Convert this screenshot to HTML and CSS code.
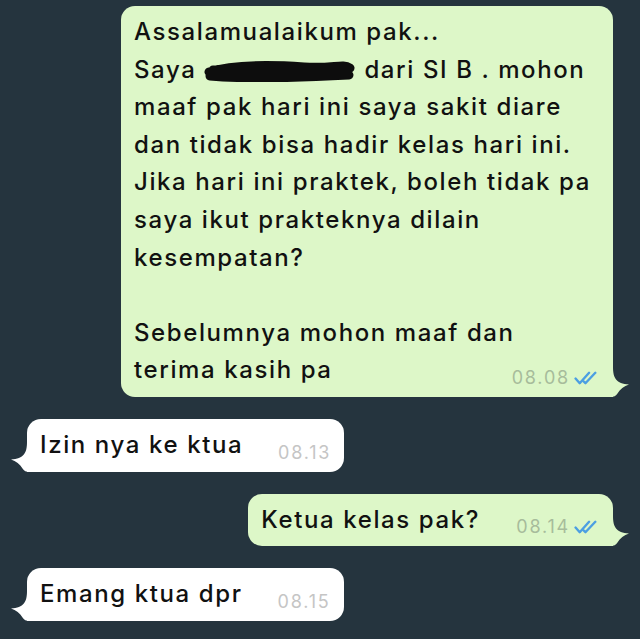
FILE: index.html
```html
<!DOCTYPE html>
<html lang="id">
<head>
    <meta charset="UTF-8">
    <meta name="viewport" content="width=device-width, initial-scale=1.0">
    <title>Chat</title>
    <link rel="stylesheet" href="styles.css">
</head>
<body>

<div class="chat">

    <div class="bubble out wide">
        <p class="text">Assalamualaikum pak...<br>Saya <svg class="redacted" viewBox="0 0 152 22"><path d="M5 12 C30 4 70 5 100 7 S138 3 146 8 M6 16 C40 19 90 18 145 15 M9 10 L140 12" /></svg> dari SI B . mohon<br>maaf pak hari ini saya sakit diare<br>dan tidak bisa hadir kelas hari ini.<br>Jika hari ini praktek, boleh tidak pa<br>saya ikut prakteknya dilain<br>kesempatan?<br><br>Sebelumnya mohon maaf dan<br>terima kasih pa</p>
        <span class="meta">08.08 <svg class="ticks" viewBox="0 0 25 13"><path d="M1.5 7 L5.5 11.5 L14.5 1.5 M9.5 10 L11 11.5 L20.5 1.5" /></svg></span>
        <svg class="tail" viewBox="0 0 22 30"><path d="M0 0 H6 C6 11 9 16.5 22 17.5 C17 19 13 22 10.5 26.5 C9 29 7 30 3 30 H0 Z" /></svg>
    </div>

    <div class="bubble in">
        <p class="text">Izin nya ke ktua<span class="spacer"></span></p>
        <span class="meta">08.13</span>
        <svg class="tail" viewBox="0 0 22 30"><path d="M0 0 H6 C6 11 9 16.5 22 17.5 C17 19 13 22 10.5 26.5 C9 29 7 30 3 30 H0 Z" /></svg>
    </div>

    <div class="bubble out">
        <p class="text">Ketua kelas pak?<span class="spacer"></span></p>
        <span class="meta">08.14 <svg class="ticks" viewBox="0 0 25 13"><path d="M1.5 7 L5.5 11.5 L14.5 1.5 M9.5 10 L11 11.5 L20.5 1.5" /></svg></span>
        <svg class="tail" viewBox="0 0 22 30"><path d="M0 0 H6 C6 11 9 16.5 22 17.5 C17 19 13 22 10.5 26.5 C9 29 7 30 3 30 H0 Z" /></svg>
    </div>

    <div class="bubble in">
        <p class="text">Emang ktua dpr<span class="spacer"></span></p>
        <span class="meta">08.15</span>
        <svg class="tail" viewBox="0 0 22 30"><path d="M0 0 H6 C6 11 9 16.5 22 17.5 C17 19 13 22 10.5 26.5 C9 29 7 30 3 30 H0 Z" /></svg>
    </div>

</div>

</body>
</html>
```

FILE: styles.css
```css
body {
    margin: 0;
    background-color: #25343e;
    font-family: Inter, "Liberation Sans", Arial, sans-serif;
    color: #141414;
}

.chat {
    display: flex;
    flex-direction: column;
    gap: 22px;
    padding: 6px 27px;
}

/* message bubble: text and time share one grid cell */
.bubble {
    position: relative;
    display: grid;
    padding: 7px 13px 8px 13px;
    border-radius: 14px;
    background: #ffffff;
    color: #111111;
}

.bubble > .text,
.bubble > .meta {
    grid-area: 1 / 1;
}

.bubble.out {
    align-self: flex-end;
    background: #ddf7c8;
    border-bottom-right-radius: 0;
}

.bubble.in {
    align-self: flex-start;
    border-bottom-left-radius: 0;
}

.bubble.wide {
    width: 492px;
    box-sizing: border-box;
}

.text {
    margin: 0;
    font-size: 24px;
    font-weight: 450;
    line-height: 37.6px;
    letter-spacing: 1.6px;
    white-space: nowrap;
}

.spacer {
    display: inline-block;
    width: 88px;
}

.out .spacer {
    width: 120px;
}

.meta {
    justify-self: end;
    align-self: end;
    display: inline-flex;
    align-items: center;
    gap: 4px;
    margin-bottom: 1px;
    font-size: 18px;
    line-height: 20px;
    letter-spacing: 1.8px;
    color: #c5c5c5;
}

.out .meta {
    color: #a7bc9b;
}

.ticks {
    width: 26px;
    height: 14px;
    fill: none;
    stroke: #4c9fe2;
    stroke-width: 2.3;
    stroke-linecap: round;
    stroke-linejoin: round;
}

.redacted {
    width: 152px;
    height: 22px;
    vertical-align: -4px;
    fill: none;
    stroke: #0d0d0d;
    stroke-width: 9;
    stroke-linecap: round;
}

/* tail drawn at the bottom corner */
.tail {
    position: absolute;
    bottom: 0;
    width: 22px;
    height: 30px;
}

.out .tail {
    right: -16px;
    fill: #ddf7c8;
}

.in .tail {
    left: -16px;
    transform: scaleX(-1);
    fill: #ffffff;
}
```
